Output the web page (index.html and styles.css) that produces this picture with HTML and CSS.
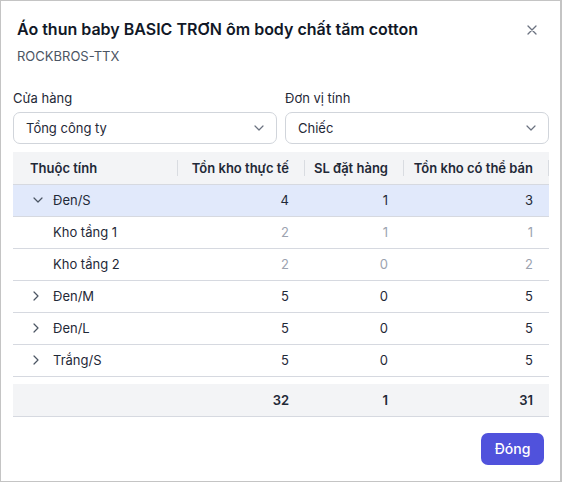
FILE: index.html
```html
<!DOCTYPE html>
<html lang="vi">
<head>
<meta charset="utf-8">
<title>Tồn kho</title>
<link rel="stylesheet" href="styles.css">
</head>
<body>
<div class="modal">
  <div class="modal-header">
    <div class="titles">
      <h1 class="title">Áo thun baby BASIC TRƠN ôm body chất tăm cotton</h1>
      <div class="subtitle">ROCKBROS-TTX</div>
    </div>
    <button class="close" aria-label="Đóng">
      <svg width="10" height="10" viewBox="0 0 10 10"><path d="M1 1L9 9M9 1L1 9" stroke="#6b7280" stroke-width="1.3" stroke-linecap="round"/></svg>
    </button>
  </div>
  <div class="modal-body">
    <div class="filters">
      <div class="field">
        <label class="label">Cửa hàng</label>
        <div class="select"><span>Tổng công ty</span>
          <svg class="caret" width="10" height="6" viewBox="0 0 10 6"><path d="M1 1L5 5L9 1" fill="none" stroke="#6b7280" stroke-width="1.2" stroke-linecap="round" stroke-linejoin="round"/></svg>
        </div>
      </div>
      <div class="field">
        <label class="label">Đơn vị tính</label>
        <div class="select"><span>Chiếc</span>
          <svg class="caret" width="10" height="6" viewBox="0 0 10 6"><path d="M1 1L5 5L9 1" fill="none" stroke="#6b7280" stroke-width="1.2" stroke-linecap="round" stroke-linejoin="round"/></svg>
        </div>
      </div>
    </div>
    <table class="stock">
      <colgroup><col class="c1"><col class="c2"><col class="c3"><col class="c4"></colgroup>
      <thead>
        <tr><th class="name-h">Thuộc tính</th><th>Tồn kho thực tế</th><th>SL đặt hàng</th><th class="last">Tồn kho có thể bán</th></tr>
      </thead>
      <tbody>
        <tr class="active"><td class="name"><span class="exp"><svg width="10" height="6" viewBox="0 0 10 6"><path d="M1 1L5 5L9 1" fill="none" stroke="#4b5563" stroke-width="1.2" stroke-linecap="round" stroke-linejoin="round"/></svg></span>Đen/S</td><td>4</td><td>1</td><td>3</td></tr>
        <tr class="child"><td class="name"><span class="exp"></span>Kho tầng 1</td><td>2</td><td>1</td><td>1</td></tr>
        <tr class="child"><td class="name"><span class="exp"></span>Kho tầng 2</td><td>2</td><td>0</td><td>2</td></tr>
        <tr><td class="name"><span class="exp"><svg width="6" height="10" viewBox="0 0 6 10"><path d="M1 1L5 5L1 9" fill="none" stroke="#4b5563" stroke-width="1.2" stroke-linecap="round" stroke-linejoin="round"/></svg></span>Đen/M</td><td>5</td><td>0</td><td>5</td></tr>
        <tr><td class="name"><span class="exp"><svg width="6" height="10" viewBox="0 0 6 10"><path d="M1 1L5 5L1 9" fill="none" stroke="#4b5563" stroke-width="1.2" stroke-linecap="round" stroke-linejoin="round"/></svg></span>Đen/L</td><td>5</td><td>0</td><td>5</td></tr>
        <tr><td class="name"><span class="exp"><svg width="6" height="10" viewBox="0 0 6 10"><path d="M1 1L5 5L1 9" fill="none" stroke="#4b5563" stroke-width="1.2" stroke-linecap="round" stroke-linejoin="round"/></svg></span>Trắng/S</td><td>5</td><td>0</td><td>5</td></tr>
      </tbody>
      <tbody class="spacer"><tr><td colspan="4"></td></tr></tbody>
      <tfoot>
        <tr><td></td><td>32</td><td>1</td><td>31</td></tr>
      </tfoot>
    </table>
  </div>
  <div class="modal-footer">
    <button class="btn-primary">Đóng</button>
  </div>
</div>
</body>
</html>
```

FILE: styles.css
```css
* { box-sizing: border-box; }
html, body { margin: 0; padding: 0; background: #fff; }
body { font-family: Inter, "Noto Sans", "Liberation Sans", sans-serif; color: #1f2937; }

.modal {
  width: 562px;
  height: 482px;
  border: 1px solid #c4c4c4;
  border-right-width: 2px;
  border-bottom-width: 1px;
  background: #fff;
  display: flex;
  flex-direction: column;
}

.modal-header {
  display: flex;
  justify-content: space-between;
  align-items: flex-start;
  padding: 16px 16px 0 16px;
}
.title {
  margin: 0;
  font-size: 16px;
  line-height: 24px;
  font-weight: 600;
  color: #111827;
}
.subtitle {
  margin-top: 5px;
  font-size: 13px;
  line-height: 20px;
  color: #4b5563;
}
.close {
  border: 0;
  background: none;
  padding: 0;
  margin: 7px 6px 0 0;
  width: 12px;
  height: 12px;
  display: flex;
  align-items: center;
  justify-content: center;
}

.modal-body { padding: 0 11px 0 12px; }

.filters {
  display: grid;
  grid-template-columns: 1fr 1fr;
  gap: 8px;
  margin-top: 22px;
}
.field { display: flex; flex-direction: column; }
.label {
  font-size: 13px;
  line-height: 20px;
  color: #1f2937;
  margin-bottom: 4px;
}
.select {
  height: 32px;
  border: 1px solid #d1d5db;
  border-radius: 7px;
  display: flex;
  align-items: center;
  justify-content: space-between;
  padding: 0 12px 0 12px;
  font-size: 13px;
  color: #1f2937;
}
.caret { display: block; }

.stock {
  margin-top: 8px;
  width: 536px;
  border-collapse: collapse;
  table-layout: fixed;
  font-size: 13px;
}
.c1 { width: 165px; }
.c2 { width: 127px; }
.c3 { width: 99px; }
.c4 { width: 145px; }

.stock th, .stock td {
  height: 32px;
  padding: 0 16px;
  text-align: right;
  white-space: nowrap;
  line-height: 20px;
}
.stock thead th {
  background: #f3f4f6;
  font-weight: 600;
  color: #1f2937;
  position: relative;
  border-bottom: 1px solid #d6d9e0;
  padding: 0 16px 0 8px;
}
.stock thead th::after {
  content: "";
  position: absolute;
  right: 0;
  top: 8px;
  height: 16px;
  width: 1px;
  background: #d9dce1;
}
.stock thead th.name-h { text-align: left; padding-left: 17px; }
.stock td.name { text-align: left; padding-left: 20px; color: #1f2937; }
.exp {
  display: inline-flex;
  width: 20px;
  height: 20px;
  align-items: center;
  justify-content: flex-start;
  vertical-align: top;
}
.exp svg { display: block; }

.stock tbody tr td { border-bottom: 1px solid #d6d9e0; }
.stock tbody tr.active td { background: #e1e9fb; }
.stock tbody tr.child td { color: #9ca3af; }
.stock tbody tr.child td.name { color: #1f2937; }

.stock tbody.spacer td { height: 8px; border-bottom: 0; padding: 0; }

.stock tfoot td {
  background: #f3f4f6;
  font-weight: 600;
  border-bottom: 1px solid #d6d9e0;
  height: 32px;
}

.modal-footer {
  display: flex;
  justify-content: flex-end;
  padding: 16px 16px 0 0;
}
.btn-primary {
  width: 63px;
  height: 32px;
  border: 0;
  border-radius: 7px;
  background: #5052dc;
  color: #fff;
  font-family: inherit;
  font-size: 14px;
  font-weight: 500;
}
```
